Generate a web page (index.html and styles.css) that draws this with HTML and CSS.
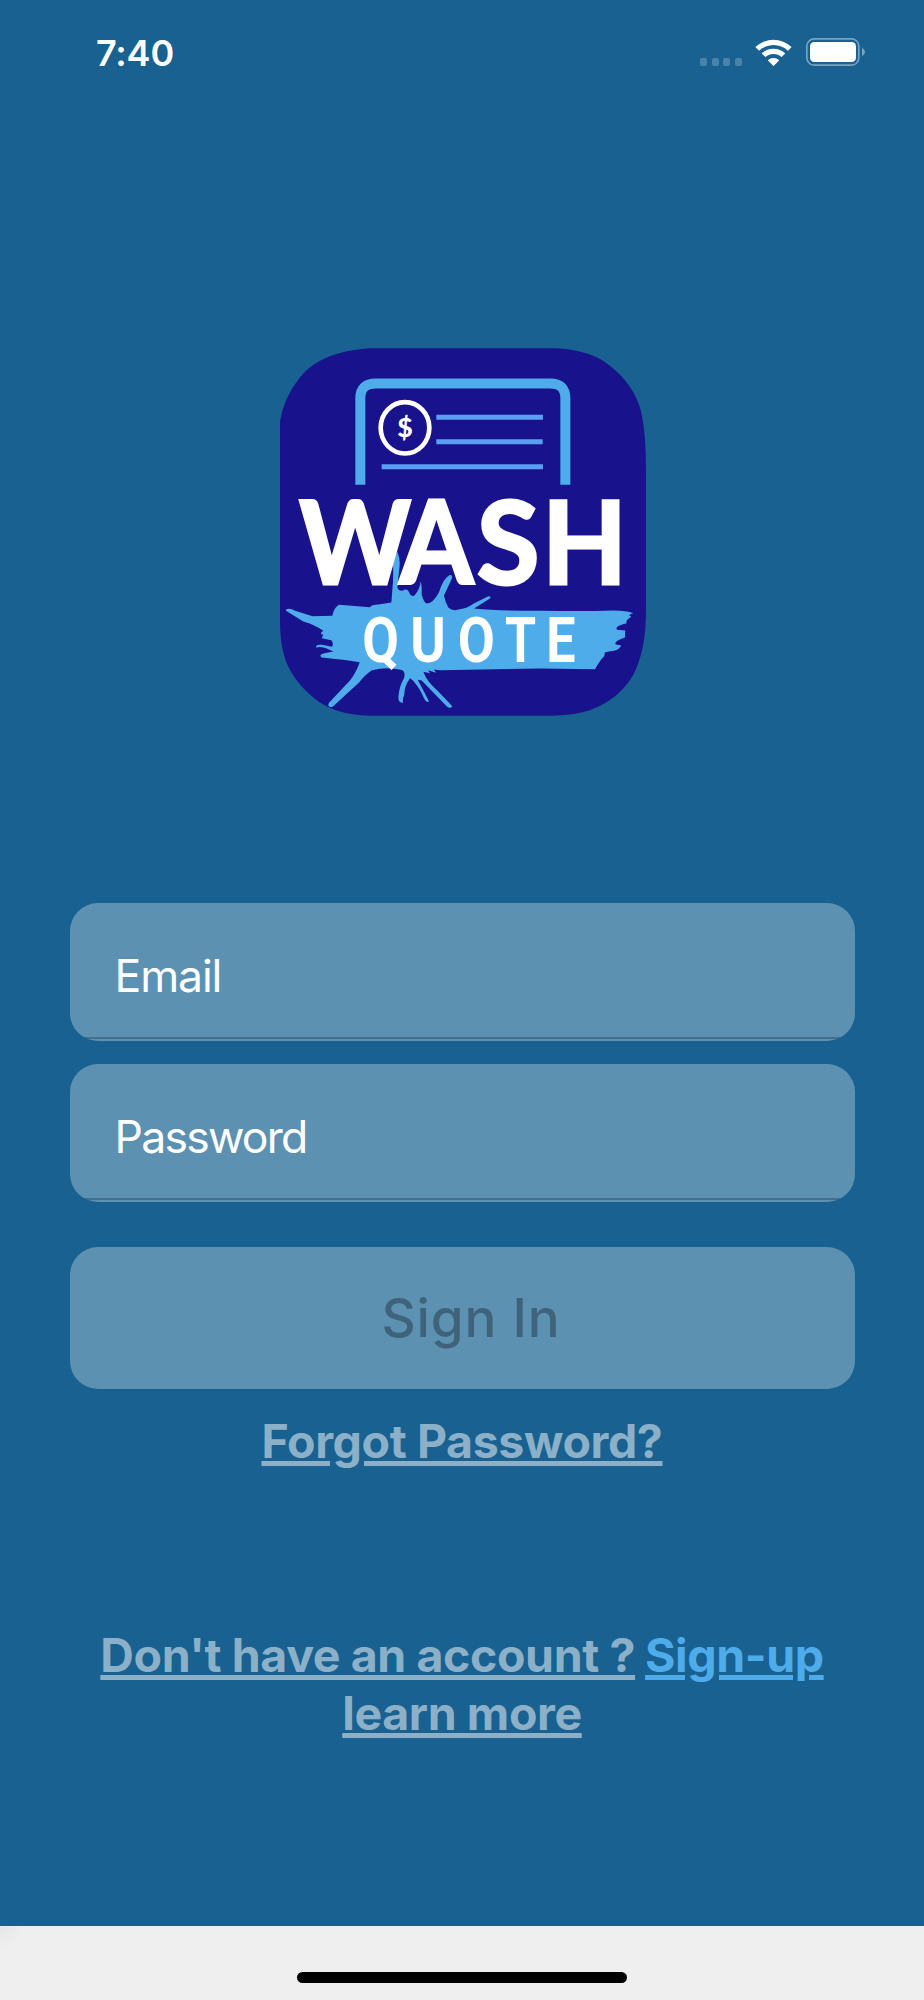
FILE: index.html
```html
<!DOCTYPE html>
<html lang="en">
<head>
    <meta charset="UTF-8">
    <meta name="viewport" content="width=device-width, initial-scale=1.0">
    <title>Wash Quote - Sign In</title>
    <link rel="stylesheet" href="styles.css">
</head>
<body>
    <div class="screen">
        <header class="status-bar">
            <span class="time">7:40</span>
            <div class="status-icons">
                <div class="signal"><i></i><i></i><i></i><i></i></div>
                <svg class="wifi" viewBox="0 0 110 82">
                    <path d="M1 24 A78 78 0 0 1 109 24 L98 35 A62 62 0 0 0 12 35 Z"/>
                    <path d="M20 43 A51 51 0 0 1 90 43 L79 54 A35 35 0 0 0 31 54 Z"/>
                    <path d="M38 63 A25 25 0 0 1 72 63 L55 81 Z"/>
                </svg>
                <svg class="battery" viewBox="0 0 177 84">
                    <rect class="shell" x="2.5" y="2.5" width="156" height="79" rx="22"/>
                    <rect class="level" x="12" y="12" width="138" height="60" rx="13"/>
                    <path class="cap" d="M168 29 Q177 34 177 42 Q177 50 168 55 Z"/>
                </svg>
            </div>
        </header>

        <svg class="logo" viewBox="30 30 1098 1103">
            <path class="tile" d="M300 30 H860 Q970 36 1026 88 Q1090 140 1112 215 Q1128 280 1128 400 V830 Q1126 940 1090 1010 Q1050 1080 970 1112 Q920 1133 830 1133 H300 Q190 1130 130 1078 Q60 1020 42 950 Q30 910 30 850 V250 Q40 180 90 117 Q150 40 300 30 Z"/>
            <path class="frame" d="M271 440 V180 Q271 136 318 136 H840 Q886 136 886 180 V440"/>
            <path class="lines" d="M499 237 H819 M499 311 H818 M335 386 H819"/>
            <ellipse class="coin" cx="405" cy="269" rx="73" ry="77"/>
            <text class="dollar" x="405" y="296">$</text>
            <!-- paint splash behind QUOTE -->
            <path class="splash" d="M48 814 Q60 808 75 818 L128 834 L187 833 Q192 808 207 800 L300 807 Q305 799 325 799 L364 793 L369 730 Q370 700 369 680 Q376 650 382 641 Q392 665 388 690 L382 750 Q392 762 403 755 Q414 750 420 768 Q430 778 435 770 Q450 752 452 730 Q456 740 455 770 Q462 795 470 796 Q490 795 507 762 Q520 720 538 711 Q548 708 546 720 L522 772 Q525 790 535 808 Q548 820 565 814 Q590 812 610 797 L655 774 Q665 774 660 781 L612 811 Q700 819 820 818 Q950 820 1030 817 Q1070 818 1090 825 Q1070 830 1084 836 Q1065 847 1070 855 Q1030 865 1042 875 L1066 877 Q1064 890 1066 897 Q1028 910 1038 919 L1054 922 Q1044 940 1020 939 L1004 943 Q1006 955 994 963 Q982 980 975 993 L810 991 L510 996 L492 994 L498 1004 L474 996 L480 1005 L460 1001 Q470 1030 505 1060 L547 1104 Q540 1113 530 1104 L455 1027 L443 1025 L463 1062 L477 1090 Q470 1095 462 1080 Q450 1050 428 1026 L420 1020 Q402 1045 403 1070 Q396 1085 400 1094 Q385 1095 385 1078 Q387 1045 402 1020 Q408 998 392 995 Q350 985 304 997 Q280 1015 268 1032 L188 1106 Q170 1110 177 1094 L240 1027 Q260 1000 269 972 Q225 965 155 958 Q145 950 160 946 L190 940 L172 932 Q155 924 138 928 Q137 918 156 920 L186 926 Q192 915 184 906 L155 900 L160 890 Q145 887 160 878 Q135 860 100 850 Q75 835 48 818 Z"/>
            <g class="wash">
                <text transform="translate(88 736) scale(.93 1)" x="0 323">WA</text>
                <text transform="translate(620 736)">S</text>
                <text transform="translate(817 736) scale(.96 1)">H</text>
            </g>
            <g class="quote">
                <text transform="translate(277 972) scale(.85 1)">Q</text>
                <text transform="translate(421 972) scale(.86 1)">U</text>
                <text transform="translate(563 972) scale(.86 1)">O</text>
                <text transform="translate(705 972) scale(.8 1)">T</text>
                <text transform="translate(829 972) scale(.83 1)">E</text>
            </g>
        </svg>

        <form class="login">
            <div class="field">Email</div>
            <div class="field password">Password</div>
            <button class="sign-in" type="button" disabled>Sign In</button>
        </form>

        <a class="link forgot">Forgot Password?</a>
        <div class="account">
            <a class="link question">Don't have an account ?</a>
            <a class="link sign-up">Sign-up</a>
            <a class="link learn">learn more</a>
        </div>
    </div>
    <footer class="home">
        <div class="home-bar"></div>
    </footer>
</body>
</html>
```
FILE: styles.css
```css
body {
    display: flex;
    flex-direction: column;
    height: 2000px;
    margin: 0;
    background-color: #efefef;
    font-family: Inter, 'Liberation Sans', sans-serif;
    overflow: hidden;
}

.screen {
    display: flex;
    flex-direction: column;
    align-items: center;
    height: 1926px;
    background-color: #186191;
}

/* Status bar */
.status-bar {
    display: flex;
    justify-content: space-between;
    box-sizing: border-box;
    width: 100%;
    height: 348px;
    padding: 31px 59px 0 96px;
    color: #fff;
}

.time {
    font-size: 36px;
    font-weight: 600;
    line-height: 45px;
    letter-spacing: -0.2px;
}

.status-icons {
    display: flex;
    align-items: flex-start;
    padding-top: 7px;
}

.signal {
    display: flex;
    gap: 4.6px;
    margin: 20px 13px 0 0;
}

.signal i {
    width: 7px;
    height: 8px;
    border-radius: 2px;
    background-color: #4883aa;
}

.wifi {
    width: 37px;
    height: 27.5px;
    margin: 0.5px 14px 0 0;
    fill: #fff;
}

.battery {
    width: 59px;
    height: 28px;
}

.shell {
    fill: none;
    stroke: #79a3bf;
    stroke-width: 5;
}

.level {
    fill: #fff;
}

.cap {
    fill: #79a3bf;
}

/* Logo */
.logo {
    width: 366px;
    height: 368px;
    margin-left: 2px;
    flex-shrink: 0;
}

.tile {
    fill: #18138c;
}

.frame {
    fill: none;
    stroke: #4facea;
    stroke-width: 30;
}

.lines {
    stroke: #5aa0f2;
    stroke-width: 15;
}

.coin {
    fill: none;
    stroke: #fff;
    stroke-width: 14;
}

.dollar {
    fill: #fff;
    font-family: Lato, sans-serif;
    font-size: 80px;
    font-weight: 900;
    text-anchor: middle;
}

.splash {
    fill: #4facea;
}

.wash {
    fill: #fff;
    font-family: Lato, sans-serif;
    font-size: 343px;
    font-weight: 700;
    stroke: #fff;
    stroke-width: 9;
}

.quote {
    fill: #fff;
    font-family: Roboto, sans-serif;
    font-size: 188px;
    font-weight: 700;
}

/* Form */
.login {
    width: 785px;
    margin-top: 187px;
}

.field {
    box-sizing: border-box;
    height: 138px;
    margin-bottom: 23px;
    padding: 45px 45px 0;
    border-radius: 28px;
    background: linear-gradient(#456f8b, #456f8b) 0 134px / 100% 2px no-repeat #5d91b2;
    color: #fff;
    font-size: 44.5px;
    line-height: 56px;
    letter-spacing: -1.1px;
}

.password {
    letter-spacing: -1.75px;
}

.sign-in {
    display: block;
    width: 100%;
    height: 142px;
    margin-top: 45px;
    padding: 0 0 0 18px;
    border: none;
    border-radius: 28px;
    background-color: #5d91b2;
    color: #3f637a;
    font-family: inherit;
    font-size: 53px;
    font-weight: 500;
    letter-spacing: 0.9px;
}

.link {
    color: #8bb0c8;
    font-size: 46.5px;
    font-weight: 700;
    letter-spacing: -0.4px;
    line-height: 58px;
    text-decoration: underline;
    text-decoration-thickness: 5px;
    text-underline-offset: 3px;
}

.forgot {
    margin-top: 23px;
}

.account {
    display: flex;
    flex-wrap: wrap;
    justify-content: center;
    column-gap: 10px;
    width: 785px;
    margin-top: 156px;
}

.sign-up {
    color: #4facea;
}

/* Home indicator */
.home {
    display: flex;
    justify-content: center;
    height: 74px;
    background: radial-gradient(circle at 0 0, #e6e6e6, #efefef 24px);
}

.home-bar {
    width: 330px;
    height: 11px;
    margin-top: 46px;
    border-radius: 6px;
    background-color: #000;
}
```
